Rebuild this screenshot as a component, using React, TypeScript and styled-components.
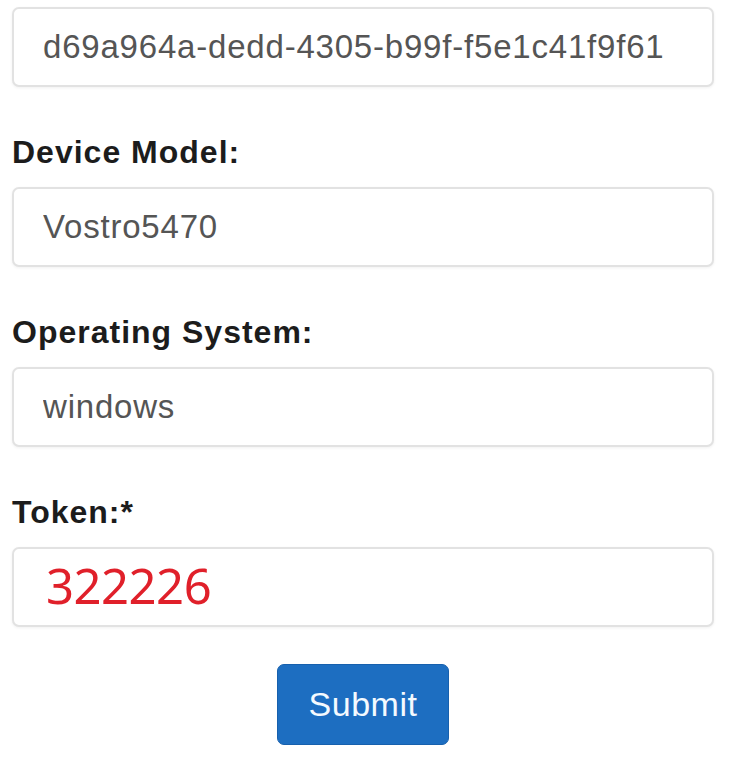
import React from 'react';
import styled, {createGlobalStyle} from 'styled-components';

const GlobalStyle = createGlobalStyle`
  body {
    margin: 0;
    background: #fff;
    font-family: "Liberation Sans", Arial, sans-serif;
  }
`

const Form = styled.form`
  width: 702px;
  padding: 7px 0 0 12px;
  display: flex;
  flex-direction: column;
`

const Field = styled.div`
  display: flex;
  flex-direction: column;
  margin-bottom: 47px;

  &:last-of-type {
    margin-bottom: 37px;
  }
`

const Label = styled.label`
  font-size: 32px;
  line-height: 36px;
  font-weight: 700;
  color: #1c1c1c;
  margin-bottom: 17px;
  letter-spacing: 1px;
`

const Input = styled.input<{ $token?: boolean }>`
  box-sizing: border-box;
  width: 702px;
  height: 80px;
  border: 2px solid #e2e2e2;
  border-radius: 7px;
  box-shadow: 0 1px 3px rgba(0, 0, 0, 0.06);
  padding: ${({$token}) => ($token ? '0 0 4px 32px' : '0 0 0 29px')};
  font-family: ${({$token}) => ($token ? '"Noto Sans", "Open Sans", sans-serif' : '"Liberation Sans", Arial, sans-serif')};
  font-size: ${({$token}) => ($token ? '49px' : '33px')};
  letter-spacing: ${({$token}) => ($token ? '-0.5px' : '0.8px')};
  color: ${({$token}) => ($token ? '#e0202a' : '#555')};
  background: #fff;
  outline: none;
`

const SubmitButton = styled.button`
  align-self: center;
  width: 172px;
  height: 81px;
  border: 1px solid #1760ad;
  border-radius: 7px;
  background: #1d6ec1;
  color: #f4faff;
  font-family: "Liberation Sans", Arial, sans-serif;
  font-size: 34px;
  letter-spacing: 0.5px;
  cursor: pointer;
`

type FieldProps = {
    label?: string;
    value: string;
    token?: boolean;
}

const FormField = ({label, value, token}: FieldProps) => (
    <Field>
        {label && <Label>{label}</Label>}
        <Input $token={token} defaultValue={value} readOnly/>
    </Field>
)

const fields: FieldProps[] = [
    {value: 'd69a964a-dedd-4305-b99f-f5e1c41f9f61'},
    {label: 'Device Model:', value: 'Vostro5470'},
    {label: 'Operating System:', value: 'windows'},
    {label: 'Token:*', value: '322226', token: true},
]

const App = () => {
    return (
        <>
            <GlobalStyle/>
            <Form onSubmit={e => e.preventDefault()}>
                {fields.map(f => <FormField key={f.value} {...f}/>)}
                <SubmitButton type="submit">Submit</SubmitButton>
            </Form>
        </>
    );
};

export default App;
